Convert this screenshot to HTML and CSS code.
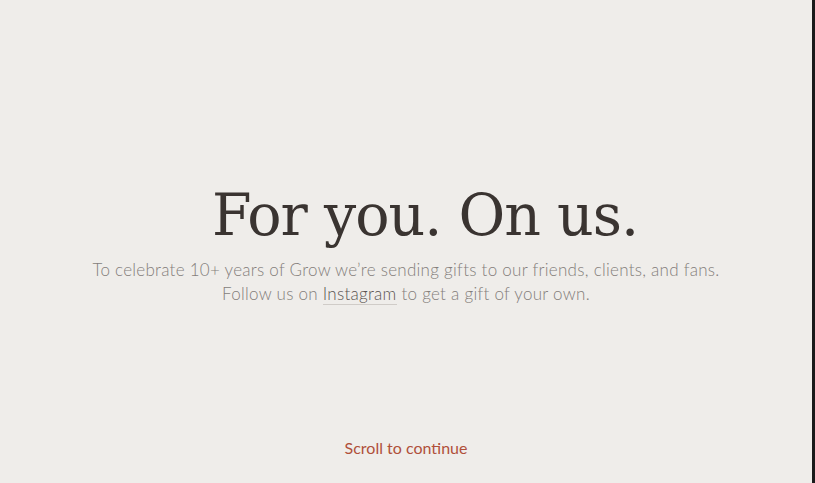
FILE: index.html
```html
<!DOCTYPE html>
<html lang="en">
<head>
<meta charset="utf-8">
<title>For you. On us.</title>
<link rel="stylesheet" href="styles.css">
</head>
<body>
<main class="page">
  <section class="hero">
    <h1 class="hero-title">For you. On us.</h1>
    <p class="hero-text">To celebrate 10+ years of Grow we’re sending gifts to our friends, clients, and fans.<br>Follow us on <a class="hero-link" href="#">Instagram</a> to get a gift of your own.</p>
  </section>
  <a class="scroll" href="#">Scroll to continue</a>
</main>
</body>
</html>
```
FILE: styles.css
```css
html, body {
  margin: 0;
  padding: 0;
  height: 100%;
}
body {
  background: #efedea;
  overflow: hidden;
}
.page {
  box-sizing: border-box;
  height: 483px;
  border-right: 3px solid #1b1b1b;
  display: flex;
  flex-direction: column;
  align-items: center;
  padding-top: 182px;
}
.hero {
  display: flex;
  flex-direction: column;
  align-items: center;
  text-align: center;
}
.hero-title {
  margin: 0 0 0 38px;
  font-family: "DejaVu Serif", serif;
  font-weight: normal;
  font-size: 57px;
  line-height: 66px;
  letter-spacing: -1px;
  color: #3a3431;
}
.hero-text {
  margin: 10px 0 0;
  font-family: "Lato", sans-serif;
  font-weight: 300;
  font-size: 17px;
  line-height: 24px;
  letter-spacing: 0.27px;
  color: #847e7b;
}
.hero-link {
  color: #5a5451;
  text-decoration: none;
  border-bottom: 1px solid #d0ccc8;
}
.scroll {
  margin-top: auto;
  margin-bottom: 26px;
  font-family: "Lato", sans-serif;
  font-size: 16px;
  color: #b0503a;
  text-decoration: none;
}
```
